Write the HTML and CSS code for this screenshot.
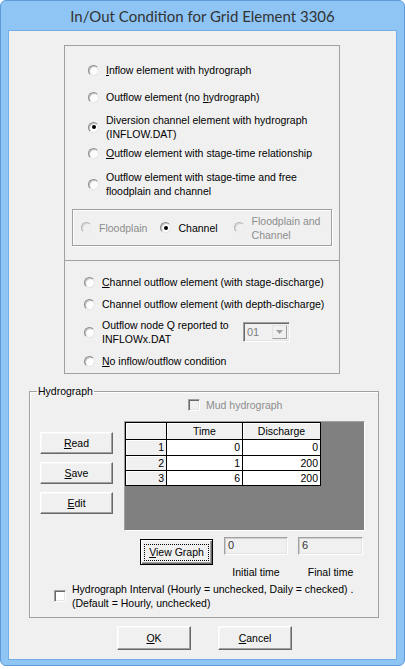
FILE: index.html
```html
<!DOCTYPE html>
<html>
<head>
<meta charset="utf-8">
<link rel="stylesheet" href="styles.css">
</head>
<body>
<div class="window">
  <div class="titlebar">In/Out Condition for Grid Element 3306</div>
  <div class="client">
    <div class="panel panel1">
      <div class="opt o1"><span class="radio"></span><span class="lbl"><u>I</u>nflow element with hydrograph</span></div>
      <div class="opt o2"><span class="radio"></span><span class="lbl">Outflow element (no <u>h</u>ydrograph)</span></div>
      <div class="opt o3"><span class="radio on"></span><span class="lbl">Diversion channel element with hydrograph<br>(INFLOW.DAT)</span></div>
      <div class="opt o4"><span class="radio"></span><span class="lbl"><u>O</u>utflow element with stage-time relationship</span></div>
      <div class="opt o5"><span class="radio"></span><span class="lbl">Outflow element with stage-time and free<br>floodplain and channel</span></div>
      <div class="subgroup">
        <div class="sopt s1"><span class="radio dis"></span><span class="lbl dim">Floodplain</span></div>
        <div class="sopt s2"><span class="radio on"></span><span class="lbl">Channel</span></div>
        <div class="sopt s3"><span class="radio dis"></span><span class="lbl dim">Floodplain and<br>Channel</span></div>
      </div>
    </div>
    <div class="panel panel2">
      <div class="opt p1"><span class="radio"></span><span class="lbl"><u>C</u>hannel outflow element (with stage-discharge)</span></div>
      <div class="opt p2"><span class="radio"></span><span class="lbl">Channel outflow element (with depth-discharge)</span></div>
      <div class="opt p3"><span class="radio"></span><span class="lbl node">Outflow node Q reported to<br>INFLOWx.DAT</span>
        <div class="combo"><span class="combo-val">01</span><span class="combo-btn"><svg width="7" height="4" viewBox="0 0 7 4"><path d="M0 0h7L3.5 4z" fill="#a0a0a0"/></svg></span></div>
      </div>
      <div class="opt p4"><span class="radio"></span><span class="lbl"><u>N</u>o inflow/outflow condition</span></div>
    </div>
    <fieldset class="hydro">
      <legend>Hydrograph</legend>
      <div class="mud"><span class="chk dis"></span><span class="lbl dim">Mud hydrograph</span></div>
      <div class="hmain">
        <div class="btncol">
          <button class="btn side"><u>R</u>ead</button>
          <button class="btn side"><u>S</u>ave</button>
          <button class="btn side"><u>E</u>dit</button>
        </div>
        <div class="gridarea">
          <table class="grid">
            <colgroup><col class="c0"><col class="c1"><col class="c2"></colgroup>
            <tr class="hdr"><th></th><th>Time</th><th>Discharge</th></tr>
            <tr class="r1"><th>1</th><td>0</td><td>0</td></tr>
            <tr><th>2</th><td>1</td><td>200</td></tr>
            <tr><th>3</th><td>6</td><td>200</td></tr>
          </table>
        </div>
      </div>
      <div class="graphrow">
        <button class="btn viewgraph"><span class="focus"><u>V</u>iew Graph</span></button>
        <div class="fld f1"><div class="tbox">0</div><div class="flbl">Initial time</div></div>
        <div class="fld f2"><div class="tbox">6</div><div class="flbl">Final time</div></div>
      </div>
      <div class="interval"><span class="chk"></span><span class="lbl">Hydrograph Interval (Hourly = unchecked, Daily = checked) .<br>(Default = Hourly, unchecked)</span></div>
    </fieldset>
    <div class="okrow">
      <button class="btn dlg ok"><u>O</u>K</button>
      <button class="btn dlg cancel"><u>C</u>ancel</button>
    </div>
  </div>
</div>
</body>
</html>
```

FILE: styles.css
```css
* { box-sizing: border-box; }
html, body { margin: 0; padding: 0; background: #ffffff; }
body {
  font-family: "Liberation Sans", Arial, sans-serif;
  font-size: 10.5px;
  color: #000;
  width: 405px;
  height: 669px;
  overflow: hidden;
}
u { text-decoration: underline; text-underline-offset: 1px; }

.window {
  width: 405px;
  height: 666px;
  background: #8ec5f5;
  border: 1px solid #5f9bd8;
  border-radius: 6px;
  display: flex;
  flex-direction: column;
}
.titlebar {
  height: 29px;
  display: flex;
  align-items: center;
  justify-content: center;
  font-family: "Lato", "Noto Sans", sans-serif;
  font-size: 15px;
  color: #333;
  padding-top: 1px;
}
.client {
  margin-left: 7px;
  width: 389px;
  height: 630px;
  background: #f0f0f0;
  border: 1px solid #74aee6;
  display: flex;
  flex-direction: column;
}

/* panels */
.panel {
  margin-left: 55px;
  width: 276px;
  border: 1px solid #a0a0a0;
  display: flex;
  flex-direction: column;
}
.panel1 {
  margin-top: 14px;
  height: 215px;
  border-bottom: none;
  padding-top: 17px;
}
.panel2 {
  height: 114px;
  padding-top: 14px;
}
.opt {
  display: flex;
  align-items: center;
  line-height: 14px;
}
.panel1 .opt { padding-left: 23px; }
.panel2 .opt { padding-left: 19px; }
.lbl { white-space: nowrap; line-height: 14px; }
.dim { color: #8d8d8d; }

.o2 { margin-top: 13px; }
.o3 { margin-top: 9px; }
.o4 { margin-top: 5px; }
.o5 { margin-top: 10px; }
.p2 { margin-top: 8px; }
.p3 { margin-top: 7px; }
.p4 { margin-top: 8px; }

.radio {
  width: 11px;
  height: 11px;
  flex: none;
  border-radius: 50%;
  border: 1px solid;
  border-color: #8c8c8c #e6e6e6 #e6e6e6 #8c8c8c;
  background: radial-gradient(circle at 60% 60%, #fdfdfd 0 45%, #e9e9e9 75%);
  box-shadow: inset 1px 1px 0 #c4c4c4;
  margin-right: 7px;
  position: relative;
}
.radio.on::after {
  content: "";
  position: absolute;
  left: 2.5px;
  top: 2.5px;
  width: 4px;
  height: 4px;
  border-radius: 50%;
  background: #000;
}
.radio.dis {
  border-color: #b5b5b5 #ececec #ececec #b5b5b5;
  background: #f0f0f0;
  box-shadow: inset 1px 1px 0 #d8d8d8;
}

.subgroup {
  margin: 11px 7px 0 7px;
  height: 37px;
  border: 1px solid #a0a0a0;
  box-shadow: inset 1px 1px 0 #fff, 1px 1px 0 #fff;
  display: flex;
  align-items: center;
}
.sopt { display: flex; align-items: center; }
.s1 { margin-left: 8px; }
.s2 { margin-left: 13px; }
.s3 { margin-left: 16px; }

.node { width: 141px; }
.combo {
  width: 47px;
  height: 20px;
  border: 1px solid;
  border-color: #a0a0a0 #fff #fff #a0a0a0;
  box-shadow: inset 1px 1px 0 #696969, inset -1px -1px 0 #e3e3e3;
  background: #f0f0f0;
  display: flex;
  align-items: stretch;
  padding: 2px;
}
.combo-val {
  flex: 1;
  color: #7f7f7f;
  font-size: 11px;
  line-height: 14px;
  padding-left: 1px;
}
.combo-btn {
  width: 15px;
  border: 1px solid;
  border-color: #e3e3e3 #a0a0a0 #a0a0a0 #e3e3e3;
  background: #f0f0f0;
  display: flex;
  align-items: center;
  justify-content: center;
}

/* hydrograph group */
.hydro {
  margin: 11px 0 0 20px;
  width: 350px;
  height: 233px;
  border: 1px solid #a0a0a0;
  box-shadow: inset 1px 1px 0 #fff;
  padding: 0;
  min-width: 0;
}
.hydro legend {
  margin-left: 7px;
  padding: 0 1px;
  line-height: 13px;
  font-size: 10.5px;
}
.mud {
  display: flex;
  align-items: center;
  margin-top: 1px;
  padding-left: 158px;
  height: 12px;
}
.chk {
  width: 12px;
  height: 12px;
  flex: none;
  border: 1px solid;
  border-color: #a0a0a0 #fff #fff #a0a0a0;
  box-shadow: inset 1px 1px 0 #696969, inset -1px -1px 0 #e3e3e3;
  background: #fff;
  margin-right: 6px;
}
.chk.dis { background: #f0f0f0; }

.hmain {
  display: flex;
  margin-top: 10px;
}
.btncol {
  margin-left: 10px;
  padding-top: 11px;
  display: flex;
  flex-direction: column;
  gap: 8px;
}
.btn {
  font-family: "Liberation Sans", Arial, sans-serif;
  font-size: 10.5px;
  color: #000;
  background: #f0f0f0;
  border: 1px solid;
  border-color: #fff #696969 #696969 #fff;
  box-shadow: inset -1px -1px 0 #a0a0a0, inset 1px 1px 0 #f8f8f8;
  padding: 0;
  margin: 0;
  display: flex;
  align-items: center;
  justify-content: center;
}
.side { width: 73px; height: 22px; }

.gridarea {
  margin-left: 11px;
  width: 241px;
  height: 110px;
  background: #808080;
  border: 1px solid;
  border-color: #a0a0a0 #fff #fff #a0a0a0;
}
.grid {
  border-collapse: collapse;
  table-layout: fixed;
  width: 196px;
  border: 1px solid #000;
  font-size: 10.5px;
}
.c0 { width: 41px; }
.c1 { width: 76px; }
.c2 { width: 78px; }
.grid th, .grid td {
  border: 1px solid #000;
  padding: 0 2px 0 0;
  height: 15px;
  line-height: 13px;
  text-align: right;
  font-weight: normal;
  white-space: nowrap;
}
.grid th {
  background: #f0f0f0;
  box-shadow: inset 1px 1px 0 #fff;
}
.grid td { background: #fff; }
.grid tr.hdr th {
  text-align: center;
  height: 17px;
  padding: 0;
}
.grid tr.r1 th, .grid tr.r1 td { height: 16px; }

.graphrow {
  display: flex;
  align-items: flex-start;
  margin-top: 6px;
}
.viewgraph {
  margin-left: 110px;
  margin-top: 2px;
  width: 73px;
  height: 26px;
  border: 1px solid #000;
  box-shadow: inset 1px 1px 0 #fff, inset -1px -1px 0 #696969, inset -2px -2px 0 #a0a0a0;
}
.focus {
  display: block;
  width: 63px;
  line-height: 15px;
  outline: 1px dotted #000;
  outline-offset: 0;
}
.fld { display: flex; flex-direction: column; align-items: center; }
.f1 { margin-left: 11px; width: 64px; }
.f2 { margin-left: 10px; width: 65px; }
.tbox {
  width: 100%;
  height: 18px;
  border: 1px solid;
  border-color: #a0a0a0 #fff #fff #a0a0a0;
  box-shadow: inset 1px 1px 0 #cfcfcf, inset -1px -1px 0 #e3e3e3;
  background: #f0f0f0;
  font-size: 11px;
  line-height: 15px;
  padding-left: 3px;
  color: #333;
}
.flbl { margin-top: 10px; line-height: 14px; }

.interval {
  display: flex;
  align-items: center;
  margin-top: 3px;
  padding-left: 24px;
}
.interval .chk { margin-right: 6px; }

.okrow {
  display: flex;
  margin-top: 8px;
}
.dlg { width: 74px; height: 24px; }
.ok { margin-left: 108px; }
.cancel { margin-left: 27px; }
```
